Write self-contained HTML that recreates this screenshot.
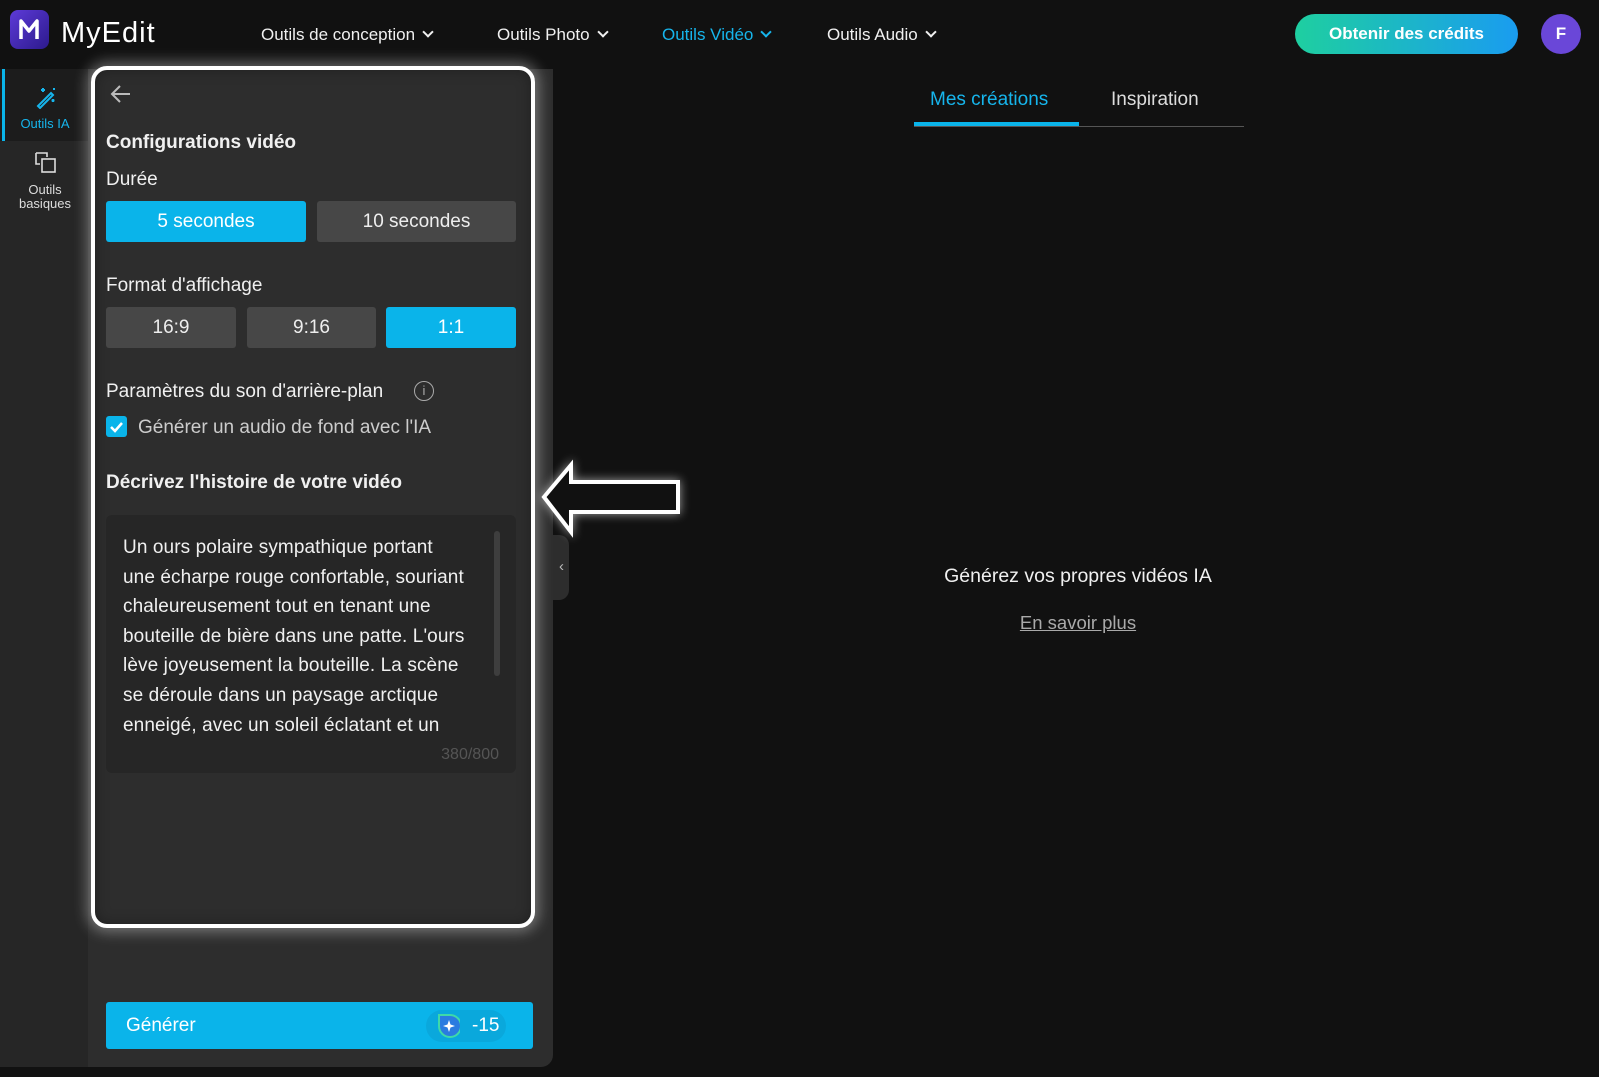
<!DOCTYPE html>
<html><head><meta charset="utf-8"><style>
*{margin:0;padding:0;box-sizing:border-box}
body{width:1599px;height:1077px;background:#111;font-family:"Liberation Sans",sans-serif;color:#eee;position:relative;overflow:hidden}
.abs{position:absolute}
.hdr{left:0;top:0;width:1599px;height:69px;background:#111}
.nav{top:25px;font-size:17px;color:#f0f0f0;white-space:nowrap}
.nav:after{content:"";display:inline-block;width:6px;height:6px;border-right:2px solid currentColor;border-bottom:2px solid currentColor;transform:rotate(45deg);margin-left:9px;position:relative;top:-4px}
.side{left:0;top:69px;width:88px;height:998px;background:#262626}
.panel{left:88px;top:69px;width:465px;height:998px;background:#2d2d2d;border-radius:0 0 12px 0}
.btn{height:41px;border-radius:3px;background:#474747;color:#eee;font-size:19px;text-align:center;line-height:41px}
.on{background:#0ab4ea;color:#fff}
.lbl{font-size:19px;color:#f0f0f0}
.b{font-weight:bold}
</style></head><body>
<div class="abs hdr"></div>
<div class="abs" style="left:10px;top:10px;width:39px;height:39px;border-radius:8px;background:linear-gradient(135deg,#5d3ad8,#2c1a8c)"></div>
<svg class="abs" style="left:10px;top:10px" width="39" height="39"><path d="M11 29V11l8 10 8-10v18" fill="none" stroke="#fff" stroke-width="3.5" stroke-linejoin="round"/></svg>
<div class="abs" style="left:61px;top:17px;font-size:29px;color:#fff;letter-spacing:1px">MyEdit</div>
<div class="abs nav" style="left:261px">Outils de conception</div>
<div class="abs nav" style="left:497px">Outils Photo</div>
<div class="abs nav" style="left:662px;color:#16b5ec">Outils Vidéo</div>
<div class="abs nav" style="left:827px">Outils Audio</div>
<div class="abs" style="left:1295px;top:14px;width:223px;height:40px;border-radius:20px;background:linear-gradient(90deg,#1ecfa0,#1a9cf0);color:#fff;font-weight:bold;font-size:17px;text-align:center;line-height:40px">Obtenir des crédits</div>
<div class="abs" style="left:1541px;top:14px;width:40px;height:40px;border-radius:50%;background:#6a47d8;color:#fff;font-weight:bold;font-size:17px;text-align:center;line-height:40px">F</div>

<div class="abs side"></div>
<div class="abs" style="left:0;top:69px;width:88px;height:72px;background:#1c1c1c"></div>
<div class="abs" style="left:2px;top:69px;width:3px;height:72px;background:#0ab4ea"></div>
<svg class="abs" style="left:34px;top:85px" width="24" height="24" viewBox="0 0 24 24" fill="none" stroke="#16b5ec" stroke-width="2"><path d="M4 21 L17 8 L19 10 L6 23 Z"/><path d="M9 3v4M7 5h4M19 14v3M17.5 15.5h3M20 3v2"/></svg>
<div class="abs" style="left:0;top:116px;width:90px;text-align:center;font-size:13px;color:#16b5ec">Outils IA</div>
<svg class="abs" style="left:34px;top:151px" width="24" height="24" viewBox="0 0 24 24" fill="none" stroke="#ddd" stroke-width="1.6"><path d="M2 2h11v4M2 2v11h4"/><rect x="8" y="8" width="13" height="13"/></svg>
<div class="abs" style="left:0;top:183px;width:90px;text-align:center;font-size:13px;line-height:14px;color:#ddd">Outils<br>basiques</div>

<div class="abs panel"></div>
<div class="abs" style="left:91px;top:66px;width:444px;height:862px;border:4px solid #fff;border-radius:16px;box-shadow:0 0 14px 4px rgba(255,255,255,.35),inset 0 0 14px rgba(0,0,0,.3)"></div>
<svg class="abs" style="left:110px;top:84px" width="22" height="20" viewBox="0 0 22 20" fill="none" stroke="#bbb" stroke-width="2"><path d="M20 10H3M10 2L2 10l8 8"/></svg>
<div class="abs lbl b" style="left:106px;top:132px">Configurations vidéo</div>
<div class="abs lbl" style="left:106px;top:169px">Durée</div>
<div class="abs btn on" style="left:106px;top:201px;width:200px">5 secondes</div>
<div class="abs btn" style="left:317px;top:201px;width:199px">10 secondes</div>
<div class="abs lbl" style="left:106px;top:275px">Format d'affichage</div>
<div class="abs btn" style="left:106px;top:307px;width:130px">16:9</div>
<div class="abs btn" style="left:247px;top:307px;width:129px">9:16</div>
<div class="abs btn on" style="left:386px;top:307px;width:130px">1:1</div>
<div class="abs lbl" style="left:106px;top:381px">Paramètres du son d'arrière-plan</div>
<div class="abs" style="left:414px;top:381px;width:20px;height:20px;border:1.5px solid #aaa;border-radius:50%;color:#aaa;font-size:13px;text-align:center;line-height:17px">i</div>
<div class="abs" style="left:106px;top:416px;width:21px;height:21px;border-radius:3px;background:#0ab4ea"></div>
<svg class="abs" style="left:106px;top:416px" width="21" height="21"><path d="M5 11l4 4 7-8" fill="none" stroke="#fff" stroke-width="2.5"/></svg>
<div class="abs lbl" style="left:138px;top:417px;color:#ccc">Générer un audio de fond avec l'IA</div>
<div class="abs lbl b" style="left:106px;top:472px">Décrivez l'histoire de votre vidéo</div>
<div class="abs" style="left:106px;top:515px;width:410px;height:258px;background:#262626;border-radius:6px"></div>
<div class="abs" style="left:494px;top:531px;width:6px;height:145px;background:#3e3e3e;border-radius:3px"></div>
<div class="abs" style="left:123px;top:533px;width:370px;height:203px;overflow:hidden;font-size:19px;line-height:29.6px;color:#f0f0f0;letter-spacing:0.1px">Un ours polaire sympathique portant<br>une écharpe rouge confortable, souriant<br>chaleureusement tout en tenant une<br>bouteille de bière dans une patte. L'ours<br>lève joyeusement la bouteille. La scène<br>se déroule dans un paysage arctique<br>enneigé, avec un soleil éclatant et un</div>
<div class="abs" style="left:420px;top:746px;width:79px;text-align:right;font-size:16px;color:#555">380/800</div>
<div class="abs" style="left:553px;top:535px;width:16px;height:65px;background:#2d2d2d;border-radius:0 10px 10px 0"></div>
<div class="abs" style="left:559px;top:558px;font-size:15px;color:#bbb">‹</div>
<svg class="abs" style="left:530px;top:450px" width="170" height="100"><path d="M14 47 L41 15 L41 32 L148 32 L148 62 L41 62 L41 82 Z" fill="#111" stroke="#fff" stroke-width="4" stroke-linejoin="miter" style="filter:drop-shadow(0 0 5px rgba(255,255,255,.6))"/></svg>

<div class="abs" style="left:106px;top:1002px;width:427px;height:47px;background:#0ab4ea;border-radius:3px"></div>
<div class="abs" style="left:126px;top:1015px;font-size:19px;color:#fff">Générer</div>
<div class="abs" style="left:426px;top:1010px;width:80px;height:32px;border-radius:16px;background:#0aa8dc"></div>
<svg class="abs" style="left:436px;top:1013px" width="24" height="26"><path d="M3 2h11a9 9 0 0 1 0 22a11 11 0 0 1-11-11z" fill="#2a7be0" stroke="#3fd9a8" stroke-width="2"/><path d="M13 7l1.5 4.5 4.5 1.5-4.5 1.5-1.5 4.5-1.5-4.5-4.5-1.5 4.5-1.5z" fill="#fff"/></svg>
<div class="abs" style="left:472px;top:1015px;font-size:19px;color:#fff">-15</div>

<div class="abs" style="left:930px;top:89px;font-size:19px;color:#16b5ec">Mes créations</div>
<div class="abs" style="left:1111px;top:89px;font-size:19px;color:#ddd">Inspiration</div>
<div class="abs" style="left:914px;top:126px;width:330px;height:1px;background:#555"></div>
<div class="abs" style="left:914px;top:122px;width:165px;height:4px;background:#0ab4ea"></div>
<div class="abs" style="left:878px;top:565px;width:400px;text-align:center;font-size:19.5px;color:#f0f0f0">Générez vos propres vidéos IA</div>
<div class="abs" style="left:878px;top:612px;width:400px;text-align:center;font-size:18.5px;color:#aaa;text-decoration:underline">En savoir plus</div>
</body></html>
